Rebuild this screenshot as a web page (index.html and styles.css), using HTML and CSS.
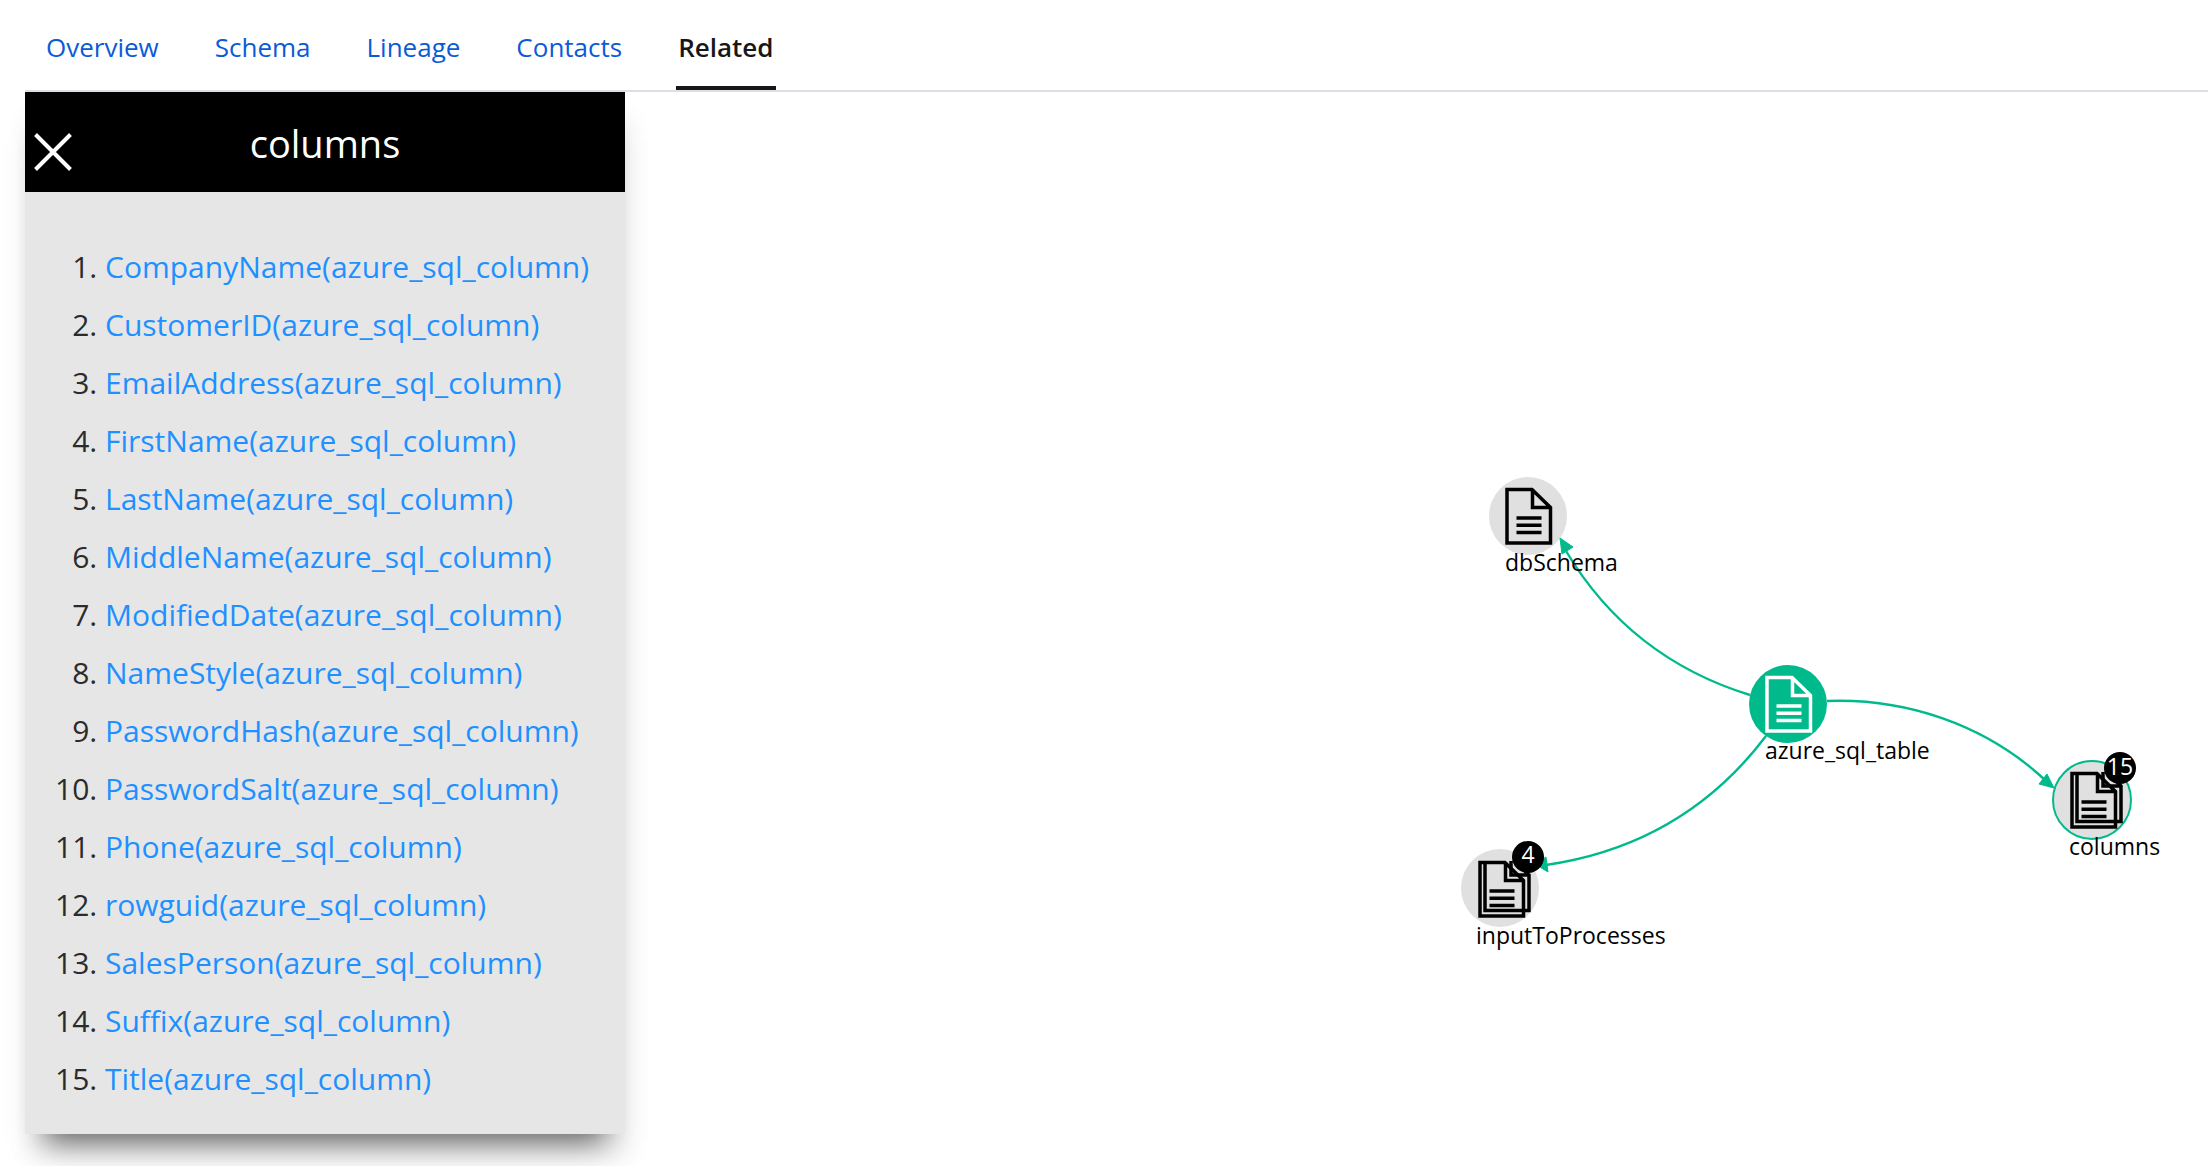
FILE: index.html
```html
<!DOCTYPE html>
<html lang="en">
<head>
<meta charset="utf-8">
<title>Related</title>
<link rel="stylesheet" href="styles.css">
</head>
<body>
<nav class="tabs" aria-label="Asset sections">
  <a class="tab" href="#overview">Overview</a>
  <a class="tab" href="#schema">Schema</a>
  <a class="tab" href="#lineage">Lineage</a>
  <a class="tab" href="#contacts">Contacts</a>
  <a class="tab tab-active" href="#related" aria-current="page">Related</a>
</nav>
<main class="related">
  <aside class="panel">
    <header class="panel-header">
      <button class="close" type="button" aria-label="Close">
        <svg width="38" height="38" viewBox="0 0 38 38" aria-hidden="true"><path d="M1.5 1.5l35 35M36.5 1.5l-35 35" stroke="currentColor" stroke-width="4"/></svg>
      </button>
      <h2 class="panel-title">columns</h2>
    </header>
    <ol class="columns">
      <li><a href="#c1">CompanyName(azure_sql_column)</a></li>
      <li><a href="#c2">CustomerID(azure_sql_column)</a></li>
      <li><a href="#c3">EmailAddress(azure_sql_column)</a></li>
      <li><a href="#c4">FirstName(azure_sql_column)</a></li>
      <li><a href="#c5">LastName(azure_sql_column)</a></li>
      <li><a href="#c6">MiddleName(azure_sql_column)</a></li>
      <li><a href="#c7">ModifiedDate(azure_sql_column)</a></li>
      <li><a href="#c8">NameStyle(azure_sql_column)</a></li>
      <li><a href="#c9">PasswordHash(azure_sql_column)</a></li>
      <li><a href="#c10">PasswordSalt(azure_sql_column)</a></li>
      <li><a href="#c11">Phone(azure_sql_column)</a></li>
      <li><a href="#c12">rowguid(azure_sql_column)</a></li>
      <li><a href="#c13">SalesPerson(azure_sql_column)</a></li>
      <li><a href="#c14">Suffix(azure_sql_column)</a></li>
      <li><a href="#c15">Title(azure_sql_column)</a></li>
    </ol>
  </aside>
  <svg class="graph" viewBox="625 92 1583 1074" role="group" aria-label="Related assets">
    <defs>
      <g id="page">
        <path d="M-21 -26.5H4L22.500 -8.500V27H-21ZM4.500 -26.500V-8.500H22.500" fill="none" stroke="currentColor" stroke-width="3.500"/>
        <path d="M-11.500 2h25M-11.500 9.300h25M-11.500 16.500h25" stroke="currentColor" stroke-width="3.500"/>
      </g>
      <clipPath id="stack-clip"><rect x="-30" y="-28" width="60" height="60"/></clipPath>
      <g id="pages">
        <path clip-path="url(#stack-clip)" d="M-16 -32H10L28 -14V21.500H-16ZM10 -32V-14H28" fill="none" stroke="currentColor" stroke-width="3.500"/>
        <use href="#page"/>
      </g>
    </defs>
    <g class="node"><circle cx="1528" cy="516" r="39"/><use href="#page" x="1528" y="516"/></g>
    <g class="node"><circle cx="1500" cy="888" r="39"/><use href="#pages" x="1501" y="889"/></g>
    <g class="node node-selected"><circle cx="2092" cy="800" r="39"/><use href="#pages" x="2093" y="800"/></g>
    <g class="edges">
      <path d="M1750 695Q1630 658 1566 551"/>
      <path d="M1827 701C1905 698 1985 724 2045 780"/>
      <path d="M1766 736C1710 810 1635 852 1546 865"/>
    </g>
    <g class="arrows">
      <path d="M1560 538L1573 547L1562 554Z"/>
      <path d="M2054 788L2039 784L2047 774Z"/>
      <path d="M1535 864L1546 857L1548 872Z"/>
    </g>
    <g class="node node-root"><circle cx="1788" cy="704" r="39"/><use href="#page" x="1788" y="704"/></g>
    <g class="badge"><circle cx="2120" cy="768" r="16"/><text x="2120" y="775">15</text></g>
    <g class="badge"><circle cx="1528" cy="857" r="16"/><text x="1528" y="863">4</text></g>
    <g class="labels">
      <text x="1505" y="571">dbSchema</text>
      <text x="1765" y="759">azure_sql_table</text>
      <text x="2069" y="855">columns</text>
      <text x="1476" y="944">inputToProcesses</text>
    </g>
  </svg>
</main>
</body>
</html>
```
FILE: styles.css
```css
* { box-sizing: border-box; }

body {
  margin: 0;
  padding-left: 25px;
  background: #fff;
  color: #2b2b2b;
  font-family: "Open Sans", "Noto Sans", sans-serif;
}

.tabs {
  display: flex;
  gap: 52px;
  height: 92px;
  padding: 0 19px;
  border-bottom: 2px solid #dcdfe8;
}

.tab {
  display: flex;
  align-items: center;
  padding: 8px 2px 0;
  border-bottom: 4px solid transparent;
  color: #0a5bd8;
  font-size: 26px;
  text-decoration: none;
}

.tab-active {
  border-bottom-color: #171717;
  color: #171717;
  font-weight: 600;
}

.related {
  display: flex;
  align-items: flex-start;
}

.panel {
  flex: 0 0 600px;
  background: #e6e6e6;
  box-shadow: 0 28px 28px -20px rgba(0, 0, 0, .6), 4px 24px 24px rgba(0, 0, 0, .07);
}

.panel-header {
  display: grid;
  grid-template-columns: 54px 1fr 54px;
  align-items: center;
  height: 100px;
  background: #000;
  color: #fff;
}

.close {
  display: flex;
  margin: 20px 0 0;
  padding: 0 0 0 9px;
  border: 0;
  background: none;
  color: inherit;
}

.panel-title {
  margin: 0;
  padding-top: 2px;
  font-size: 38px;
  font-weight: 400;
  text-align: center;
}

.columns {
  margin: 0;
  padding: 46px 0 26px 80px;
  font-size: 30px;
  line-height: 58px;
}

.columns a {
  color: #1e90ff;
  text-decoration: none;
}

.graph {
  display: block;
  flex: 1;
  min-width: 0;
  color: #000;
}

.node circle { fill: #e0e0e0; }
.node-selected circle { stroke: #00ba8b; stroke-width: 2; }
.node-root { color: #fff; }
.node-root circle { fill: #00ba8b; }
.edges path { fill: none; stroke: #00ba8b; stroke-width: 2.4; }
.arrows path { fill: #00ba8b; stroke: #00ba8b; stroke-width: 1; }
.labels text { font-size: 23px; }
.badge text { fill: #fff; font-size: 23px; text-anchor: middle; }
```
